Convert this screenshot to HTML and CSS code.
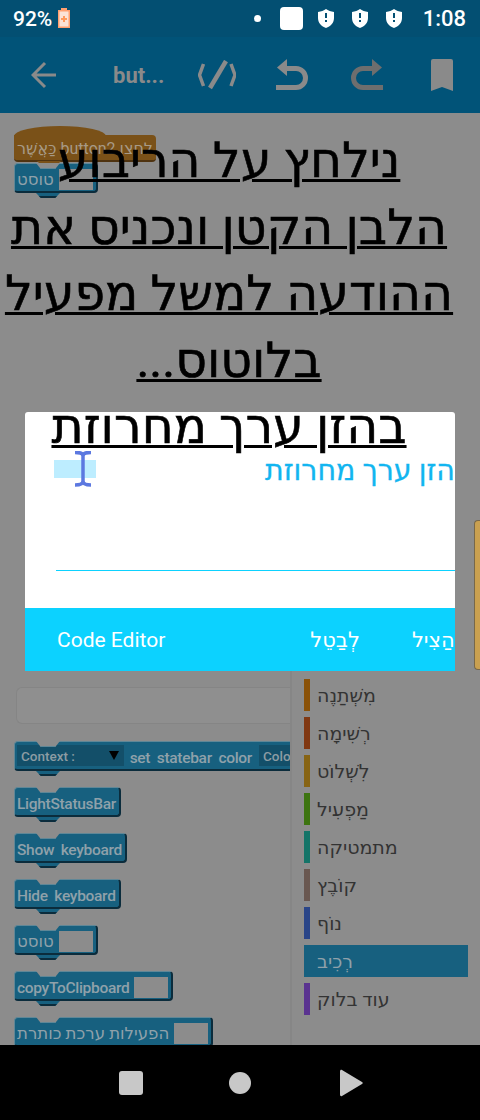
FILE: index.html
```html
<!DOCTYPE html>
<html lang="en">
<head>
  <meta charset="UTF-8" />
  <meta name="viewport" content="width=device-width, initial-scale=1.0"/>
  <title>Block Editor</title>
  <link rel="stylesheet" href="styles.css">
</head>
<body>

<div class="statusbar">
  <span class="battery-text">92%</span>
  <svg class="battery" width="12" height="20" viewBox="0 0 12 20">
    <path d="M3 0h6v2h3v18H0V2h3z" fill="#ffa070"/>
    <rect x="1.500" y="3.500" width="9" height="15" fill="#fbe3d6"/>
    <path d="M5 8h2v2h2v2H7v2H5v-2H3v-2h2z" fill="#ff9a5c"/>
  </svg>
  <span class="status-space"></span>
  <span class="status-dot"></span>
  <span class="status-square"></span>
  <svg class="shield" width="16" height="19" viewBox="0 0 16 19"><path d="M8 0c2 1.500 5 2.500 8 3v6c0 5-3.500 8.500-8 10C3.500 17.500 0 14 0 9V3c3-.5 6-1.500 8-3z" fill="#fff"/><path d="M7 4h2v5H7zM7 11h2v2H7z" fill="#034f72"/></svg>
  <svg class="shield" width="16" height="19" viewBox="0 0 16 19"><path d="M8 0c2 1.500 5 2.500 8 3v6c0 5-3.500 8.500-8 10C3.500 17.500 0 14 0 9V3c3-.5 6-1.500 8-3z" fill="#fff"/><path d="M7 4h2v5H7zM7 11h2v2H7z" fill="#034f72"/></svg>
  <svg class="shield" width="16" height="19" viewBox="0 0 16 19"><path d="M8 0c2 1.500 5 2.500 8 3v6c0 5-3.500 8.500-8 10C3.500 17.500 0 14 0 9V3c3-.5 6-1.500 8-3z" fill="#fff"/><path d="M7 4h2v5H7zM7 11h2v2H7z" fill="#034f72"/></svg>
  <span class="clock">1:08</span>
</div>

<div class="toolbar">
  <svg class="tool-back" width="26" height="28" viewBox="0 0 26 28" fill="none" stroke="#8a8a8a" stroke-width="3"><path d="M25 14H3M14 2L2 14l12 12"/></svg>
  <span class="tool-title">but...</span>
  <svg class="tool-code" width="38" height="30" viewBox="0 0 38 30" fill="none" stroke="#8a8a8a"><path d="M5.500 4L1.500 15l4 11M33 4l4 11-4 11" stroke-width="3.500"/><path d="M28 1L12 28" stroke-width="4.500"/></svg>
  <svg class="tool-undo" width="32" height="32" viewBox="0 0 32 32" fill="none"><path d="M9 9.500h11a9.500 9.500 0 0 1 0 19H0" stroke="#8a8a8a" stroke-width="5"/><path d="M11 0v17L1 8.500z" fill="#8a8a8a"/></svg>
  <svg class="tool-redo" width="32" height="32" viewBox="0 0 32 32" fill="none"><path d="M23 9.500H12a9.500 9.500 0 0 0 0 19h20" stroke="#6e6e6e" stroke-width="5"/><path d="M21 0v17l10-8.500z" fill="#6e6e6e"/></svg>
  <svg class="tool-mark" width="22" height="32" viewBox="0 0 22 32"><path d="M2 0h18a2 2 0 0 1 2 2v30l-11-4-11 4V2a2 2 0 0 1 2-2z" fill="#8a8a8a"/></svg>
</div>

<div class="workspace">
  <div class="hat-block"><span>לחצן button2 כַּאֲשֶׁר</span></div>
  <div class="block toast-block"><span class="block-label block-label-he">טוסט</span><span class="slot slot-toast"></span></div>

  <h1 class="note">
    <u>נילחץ על הריבוע</u><br>
    <u>הלבן הקטן ונכניס את</u><br>
    <u>ההודעה למשל מפעיל</u><br>
    <u>בלוטוס...</u><br>
    <u>בהזן ערך מחרוזת</u>
  </h1>

  <div class="dialog">
    <div class="dialog-title" dir="rtl">הזן ערך מחרוזת</div>
    <div class="dialog-input">
      <span class="selection"></span>
      <svg class="cursor-handle" width="18" height="36" viewBox="0 0 18 36" fill="none" stroke="#5c78e0" stroke-width="3.500"><path d="M1 1.500c4 0 8 0 8 3.500 0-3.500 4-3.500 8-3.500M9 5v25M1 34c4 0 8-1 8-4 0 3 4 4 8 4"/></svg>
    </div>
    <div class="dialog-actions">
      <span class="dialog-link">Code Editor</span>
      <span class="dialog-link dialog-cancel">לְבַטֵל</span>
      <span class="dialog-link dialog-save">הַצִיל</span>
    </div>
  </div>

  <div class="scroll-thumb"></div>
</div>

<div class="panel">
  <div class="flyout">
    <div class="search"></div>
    <div class="block block-wide">
      <span class="dropdown">Context :<i class="arrow"></i></span>
      <span class="block-label">set statebar color</span>
      <span class="dropdown dropdown-color">Color</span>
    </div>
    <div class="block"><span class="block-label">LightStatusBar</span></div>
    <div class="block"><span class="block-label">Show keyboard</span></div>
    <div class="block"><span class="block-label">Hide keyboard</span></div>
    <div class="block"><span class="block-label block-label-he">טוסט</span><span class="slot slot-toast"></span></div>
    <div class="block"><span class="block-label">copyToClipboard</span><span class="slot"></span></div>
    <div class="block"><span class="block-label block-label-he">הפעילות ערכת כותרת</span><span class="slot"></span></div>
  </div>
  <div class="categories">
    <div class="category"><span class="swatch swatch-variable"></span><span>מִשְׁתַנֶה</span></div>
    <div class="category"><span class="swatch swatch-list"></span><span>רְשִׁימָה</span></div>
    <div class="category"><span class="swatch swatch-control"></span><span>לִשְׁלוֹט</span></div>
    <div class="category"><span class="swatch swatch-operator"></span><span>מַפְעִיל</span></div>
    <div class="category"><span class="swatch swatch-math"></span><span>מתמטיקה</span></div>
    <div class="category"><span class="swatch swatch-file"></span><span>קוֹבֶץ</span></div>
    <div class="category"><span class="swatch swatch-view"></span><span>נוֹף</span></div>
    <div class="category category-active"><span class="swatch"></span><span>רְכִיב</span></div>
    <div class="category"><span class="swatch swatch-more"></span><span>עוד בלוק</span></div>
  </div>
</div>

<div class="navbar">
  <span class="nav-square"></span>
  <span class="nav-circle"></span>
  <svg width="24" height="28" viewBox="0 0 24 28"><path d="M1 2.500c0-1.500 1-2 2-1.500l20 12c1 .6 1 1.400 0 2L3 27c-1 .5-2 0-2-1.500z" fill="#c8c8c8"/></svg>
</div>

</body>
</html>
```

FILE: styles.css
```css
* {
  box-sizing: border-box;
}
body {
  margin: 0;
  width: 480px;
  height: 1120px;
  overflow: hidden;
  display: flex;
  flex-direction: column;
  font-family: Roboto, "Noto Sans", "DejaVu Sans", sans-serif;
  background: #8c8c8c;
}

/* status bar */
.statusbar {
  height: 37px;
  flex: none;
  display: flex;
  align-items: center;
  padding: 0 14px 0 13px;
  background: #034f72;
  color: #fff;
}
.battery-text {
  font-size: 21px;
  font-weight: 500;
}
.battery {
  margin-left: 6px;
  margin-bottom: 1px;
}
.status-space {
  flex: 1;
}
.status-dot {
  width: 7px;
  height: 7px;
  border-radius: 50%;
  background: #fff;
  margin-right: 19px;
}
.status-square {
  width: 23px;
  height: 23px;
  border-radius: 4px;
  background: #fff;
  margin-right: 15px;
}
.shield {
  margin-right: 18px;
}
.shield:last-of-type {
  margin-right: 21px;
}
.clock {
  font-size: 22px;
  font-weight: 500;
}

/* toolbar */
.toolbar {
  height: 76px;
  flex: none;
  display: flex;
  align-items: center;
  padding-left: 31px;
  background: #015378;
}
.tool-title {
  width: 50px;
  margin-left: 56px;
  font-size: 22px;
  font-weight: 700;
  color: #8a8a8a;
}
.tool-code {
  margin-left: 35px;
}
.tool-undo {
  margin-left: 40px;
}
.tool-redo {
  margin-left: 43px;
}
.tool-mark {
  margin-left: 48px;
}

/* workspace with the dialog */
.workspace {
  position: relative;
  height: 558px;
  flex: none;
}
.note {
  margin: 0;
  width: 458px;
  padding-top: 15px;
  position: relative;
  z-index: 3;
  text-align: center;
  direction: rtl;
  font-size: 49px;
  font-weight: 400;
  line-height: 66.500px;
  white-space: nowrap;
  color: #000;
  -webkit-text-stroke: 0.6px #000;
}
.note u {
  text-decoration-thickness: 3px;
}
.hat-block {
  position: absolute;
  left: 14px;
  top: 22px;
  width: 142px;
  height: 27px;
  padding-top: 4px;
  border-radius: 0 4px 4px 4px;
  border-bottom: 2px solid #4f3310;
  background: #7a5118;
  color: #a79a86;
  font-size: 16px;
  text-align: center;
  white-space: nowrap;
  direction: rtl;
}
.hat-block::before {
  content: "";
  position: absolute;
  left: 0;
  top: -9px;
  width: 92px;
  height: 14px;
  border-radius: 46px 46px 0 0 / 10px 10px 0 0;
  background: #7a5118;
}
.hat-block::after {
  content: "";
  position: absolute;
  left: 23px;
  bottom: -6px;
  width: 24px;
  height: 5px;
  background: #7a5118;
  clip-path: polygon(0 0, 100% 0, 80% 100%, 20% 100%);
}
.hat-block span {
  position: relative;
}
.dialog {
  position: absolute;
  left: 25px;
  top: 299px;
  width: 430px;
  height: 259px;
  z-index: 2;
  overflow: hidden;
  display: flex;
  flex-direction: column;
  border-radius: 3px 3px 0 0;
  background: #fff;
}
.dialog-title {
  height: 78px;
  padding-top: 43px;
  font-size: 28.500px;
  line-height: 32px;
  color: #12b5f0;
  white-space: nowrap;
  -webkit-text-stroke: 0.3px #12b5f0;
}
.dialog-input {
  position: relative;
  height: 81px;
  margin-left: 31px;
  margin-right: 0;
  border-bottom: 1px solid #0cd2ff;
}
.selection {
  position: absolute;
  left: -2px;
  top: -30px;
  width: 42px;
  height: 18px;
  background: #bdedff;
}
.cursor-handle {
  position: absolute;
  left: 18px;
  top: -39px;
}
.dialog-actions {
  margin-top: 37px;
  height: 63px;
  display: flex;
  align-items: center;
  padding-left: 32px;
  background: #0cd2ff;
  color: #fff;
  font-size: 21px;
  white-space: nowrap;
}
.dialog-cancel {
  margin-left: 145px;
}
.dialog-save {
  margin-left: 52px;
}
.scroll-thumb {
  position: absolute;
  right: 0;
  top: 407px;
  width: 6px;
  height: 150px;
  border: 1px solid #77674a;
  border-right: 0;
  border-radius: 4px 0 0 4px;
  background: #c9a050;
}

/* lower panel: blocks and categories */
.panel {
  height: 374px;
  flex: none;
  display: flex;
  overflow: hidden;
}
.flyout {
  width: 276px;
  flex: none;
  padding: 16px 0 0 14px;
  overflow: hidden;
  border-right: 2px solid #868686;
  box-sizing: content-box;
}
.search {
  width: 274px;
  margin-left: 2px;
  height: 37px;
  margin-bottom: 17px;
  border: 1px solid #858585;
  border-right: 0;
  border-radius: 6px 0 0 6px;
  background: #8f8f8f;
}
.block {
  position: relative;
  display: flex;
  width: fit-content;
  height: 30px;
  align-items: center;
  gap: 5px;
  padding: 0 3px 0 2px;
  margin-bottom: 16px;
  white-space: nowrap;
  border-radius: 4px;
  border-top: 1px solid #5f8797;
  border-left: 1px solid #5f8797;
  border-right: 2px solid #0b2c3c;
  border-bottom: 2px solid #0b2c3c;
  background: #17607f;
}
.block::before {
  content: "";
  position: absolute;
  left: 21px;
  top: -1px;
  width: 24px;
  height: 5px;
  background: #8c8c8c;
  border-bottom: 1px solid #5f8797;
  clip-path: polygon(0 0, 100% 0, 80% 100%, 20% 100%);
}
.block::after {
  content: "";
  position: absolute;
  left: 21px;
  bottom: -7px;
  width: 24px;
  height: 5px;
  background: #17607f;
  box-shadow: inset 0 -2px #0b2c3c;
  clip-path: polygon(0 0, 100% 0, 80% 100%, 20% 100%);
}
.workspace .toast-block {
  position: absolute;
  left: 14px;
  top: 50px;
  z-index: 1;
}
.block-label {
  padding-top: 4px;
  font-size: 15.500px;
  font-weight: 500;
  color: #8fa1aa;
  letter-spacing: -0.3px;
  word-spacing: 3px;
}
.block-label-he {
  font-size: 16.600px;
  letter-spacing: 0;
  word-spacing: 0;
}
.block-wide {
  width: 300px;
  gap: 6px;
}
.dropdown {
  display: flex;
  justify-content: space-between;
  align-items: center;
  width: 108px;
  height: 21px;
  padding: 0 5px 0 4px;
  background: #134f69;
  color: #8c9ca3;
  font-size: 13.500px;
  font-weight: 500;
}
.dropdown-color {
  width: 50px;
  flex: none;
  margin-left: 1px;
}
.arrow {
  width: 0;
  height: 0;
  border-left: 5px solid transparent;
  border-right: 5px solid transparent;
  border-top: 9px solid #000;
}
.slot {
  width: 34px;
  height: 21px;
  margin-top: 3px;
  background: #8c8c8c;
}
.slot-toast {
  width: 34px;
}
.categories {
  flex: 1;
  padding: 8px 12px 0 12px;
}
.category {
  display: flex;
  align-items: center;
  gap: 7px;
  height: 32px;
  margin-bottom: 6px;
  color: #333;
  font-size: 19px;
  direction: ltr;
}
.swatch {
  width: 6px;
  height: 32px;
}
.swatch-variable { background: #8a5208; }
.swatch-list { background: #803812; }
.swatch-control { background: #876414; }
.swatch-operator { background: #3d7410; }
.swatch-math { background: #147468; }
.swatch-file { background: #695750; }
.swatch-view { background: #2a4588; }
.swatch-more { background: #5a3390; }
.category-active {
  background: #17607f;
  color: #8fa1aa;
}

/* navigation bar */
.navbar {
  height: 75px;
  flex: none;
  display: flex;
  align-items: center;
  padding-left: 119px;
  background: #000;
}
.nav-square {
  width: 24px;
  height: 24px;
  border-radius: 3px;
  background: #c8c8c8;
}
.nav-circle {
  width: 22px;
  height: 22px;
  margin-left: 86px;
  margin-right: 88px;
  border-radius: 50%;
  background: #c8c8c8;
}
```
